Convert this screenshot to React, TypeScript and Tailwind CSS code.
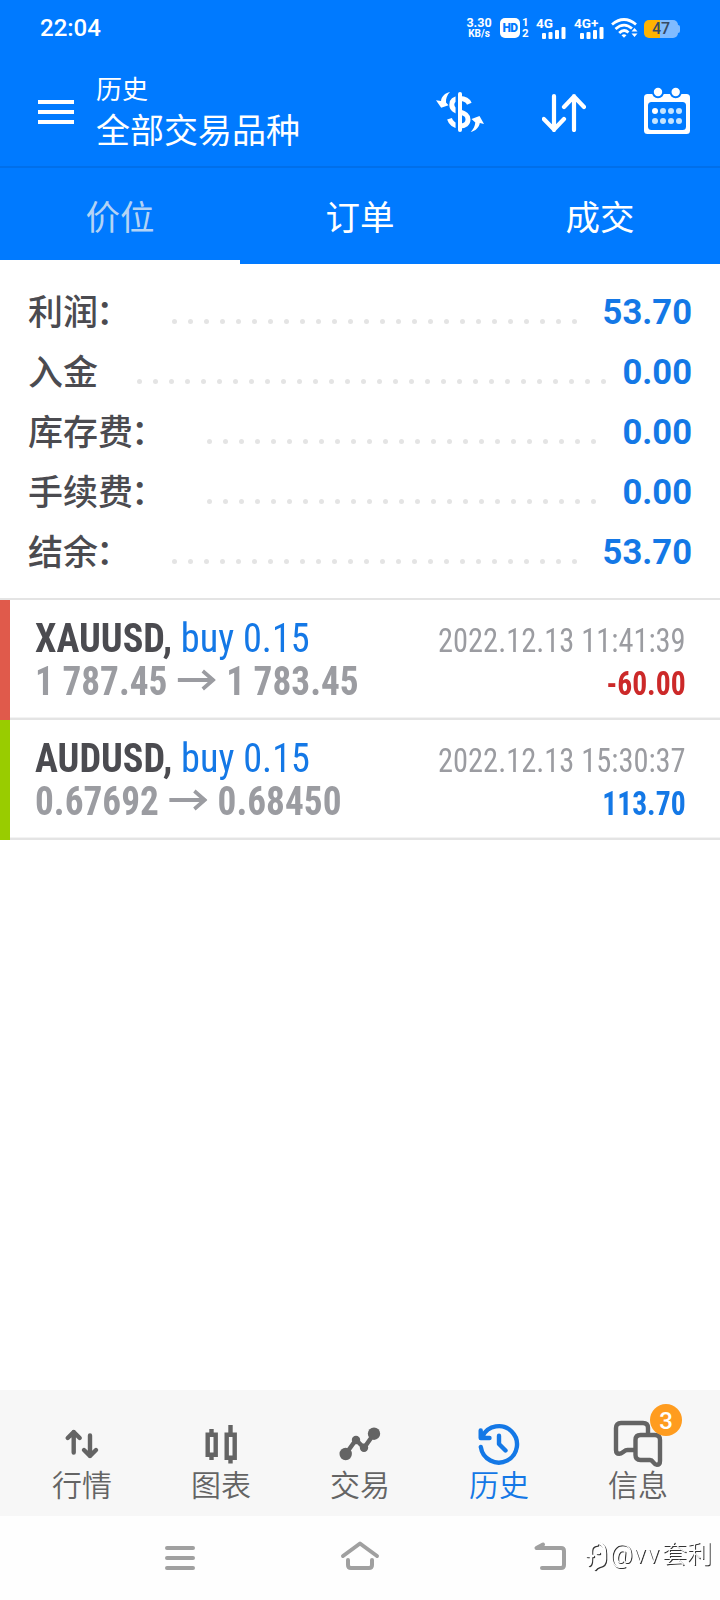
import React from 'react';
import clsx from 'clsx';

interface SummaryRow {
  label: string;
  colon?: boolean;
  dots: number;
  value: string;
}

interface Deal {
  symbol: string;
  side: string;
  open: string;
  close: string;
  time: string;
  profit: string;
  bar: string;
  profitColor: string;
}

const tabs = ['价位', '订单', '成交'];

const summary: SummaryRow[] = [
  { label: '利润', colon: true, dots: 26, value: '53.70' },
  { label: '入金', dots: 30, value: '0.00' },
  { label: '库存费', colon: true, dots: 25, value: '0.00' },
  { label: '手续费', colon: true, dots: 25, value: '0.00' },
  { label: '结余', colon: true, dots: 26, value: '53.70' },
];

const deals: Deal[] = [
  { symbol: 'XAUUSD,', side: 'buy 0.15', open: '1 787.45', close: '1 783.45', time: '2022.12.13 11:41:39', profit: '-60.00', bar: 'bg-[#e05a4b]', profitColor: 'text-[#cc2929]' },
  { symbol: 'AUDUSD,', side: 'buy 0.15', open: '0.67692', close: '0.68450', time: '2022.12.13 15:30:37', profit: '113.70', bar: 'bg-[#99cc00]', profitColor: 'text-[#1478e6]' },
];

const SignalBars = () => (
  <svg width="24" height="12" viewBox="0 0 24 12" fill="#fff" className="absolute left-[6px] top-[9px]">
    <rect x="0" y="6" width="4" height="6" rx="1" />
    <rect x="6.5" y="5" width="4" height="7" rx="1" />
    <rect x="13" y="3" width="4" height="9" rx="1" />
    <rect x="19.5" y="0" width="4" height="12" rx="1" />
  </svg>
);

const StatusBar = () => (
  <div className="flex h-[58px] items-start pl-10 pr-10 text-white">
    <span className="mt-[14px] text-[24px] font-medium leading-7">22:04</span>
    <div className="ml-auto flex h-5 mt-[18px] text-white">
      <div className="w-[26px] text-center font-bold">
        <div className="text-[12.5px] leading-[10px]">3.30</div>
        <div className="mt-[1px] text-[10px] leading-[10px]">KB/s</div>
      </div>
      <div className="ml-2 flex h-5 w-5 items-center justify-center rounded-[5px] bg-white text-[12px] font-black tracking-[-0.5px] text-[#007aff]">HD</div>
      <div className="-mt-[1px] ml-[2px] w-[7px] text-[11.5px] font-bold leading-[11px]">
        <div>1</div>
        <div>2</div>
      </div>
      <div className="relative ml-[7px] w-[38px]">
        <div className="text-[13.5px] font-bold leading-[10px]">4G</div>
        <SignalBars />
      </div>
      <div className="relative w-[37px]">
        <div className="text-[13.5px] font-bold leading-[10px]">4G+</div>
        <SignalBars />
      </div>
      <svg width="27" height="20" viewBox="0 0 27 20" fill="none" stroke="#fff" strokeWidth="2.8">
        <path d="M1 6.5Q13 -3.5 25 6.5" />
        <path d="M4.5 11Q13 3.5 21 10.5" />
        <path d="M8.2 15Q13 10.2 17.5 14.5" />
        <path d="M10.5 17.3Q13 15.3 15.5 17.3L13 19.8Z" fill="#fff" stroke="none" />
        <path d="M20.5 13.5L23.5 10L26.5 13.5ZM20.5 15.5L23.5 19L26.5 15.5Z" fill="#fff" stroke="none" />
      </svg>
      <div className="ml-[6px] mt-[2px] flex h-[18px] items-center">
        <div className="flex h-[18px] w-[34px] items-center justify-center rounded-[5px] bg-linear-to-r from-[#ffb300] from-47% to-[#80bbff] to-47% text-[16px] font-medium text-[#374a63]">47</div>
        <div className="h-2 w-[2px] rounded-r bg-[#80bbff]" />
      </div>
    </div>
  </div>
);

const Header = () => (
  <div className="flex h-[110px] items-center border-b-2 border-[#006fea] pl-[38px] pr-[30px] text-white">
    <div className="space-y-[6px]">
      <div className="h-1 w-9 bg-white" />
      <div className="h-1 w-9 bg-white" />
      <div className="h-1 w-9 bg-white" />
    </div>
    <div className="ml-[22px] mt-[1px]">
      <div className="text-[26px] leading-9">历史</div>
      <div className="text-[34px] leading-[46px]">全部交易品种</div>
    </div>
    <svg width="50" height="44" viewBox="0 0 50 44" fill="none" className="ml-auto">
      <path d="M33.3 13.8C31.5 9.5 28 8.6 24 8.6C18.5 8.6 15.8 11 15.8 14.8C15.8 19.5 19.5 20.8 24 22C29.5 23.5 32 25.2 32 29.5C32 33.5 29 36 24 36C18.5 36 15 33.5 13.5 28.8" stroke="#fff" strokeWidth="5" />
      <path d="M20.8 2V42" stroke="#007aff" strokeWidth="2.5" />
      <path d="M24 4V40" stroke="#fff" strokeWidth="4" strokeLinecap="round" />
      <path d="M14 2C9 3 5.5 6.5 5 11L0 10.2L5.2 17.8L12.5 15.3L10 12.5C9.8 8.5 11 5 14 2Z" fill="#fff" />
      <path d="M34.7 42C37.5 39 39 36 39.3 32.5L35.5 29L43.5 26L48 34L43.8 33C43 37.5 39.5 41 34.7 42Z" fill="#fff" />
    </svg>
    <svg width="44" height="40" viewBox="0 0 44 40" fill="none" stroke="#fff" strokeWidth="4.2" strokeLinecap="round" strokeLinejoin="round" className="-mt-[1px] ml-[56px]">
      <path d="M12 4V38M1.8 27L12 37.5L22 27M32 38V4M22 15L32 4.5L42 15" />
    </svg>
    <svg width="46" height="48" viewBox="0 0 46 48" className="-mt-[2px] ml-[58px]">
      <rect y="7" width="46" height="40" rx="3.5" fill="#fff" />
      <rect x="4" y="15" width="38" height="28" rx="3.5" fill="#007aff" />
      <circle cx="14" cy="5" r="5.2" fill="#fff" stroke="#007aff" strokeWidth="2" />
      <circle cx="31.7" cy="5" r="5.2" fill="#fff" stroke="#007aff" strokeWidth="2" />
      {[11, 19, 27, 35].map((x) => (
        <g key={x} fill={x === 11 ? '#fff' : '#c4e4ff'}>
          <circle cx={x} cy="24" r="3" />
          <circle cx={x} cy="34" r="3" fill="#c4e4ff" />
        </g>
      ))}
    </svg>
  </div>
);

const Tabs = () => (
  <div className="grid h-24 grid-cols-3 text-center text-[34.5px] leading-[100px]">
    {tabs.map((tab, i) => (
      <div key={tab} className={clsx('h-24', i === 0 ? 'border-b-4 border-white text-[#b3d3f5]' : 'text-white')}>
        {tab}
      </div>
    ))}
  </div>
);

const Summary = () => (
  <div className="border-b-2 border-[#e4e4e4] px-7 pb-[18px] pt-4">
    {summary.map((row) => (
      <div key={row.label} className="flex h-[60px] items-center">
        <span className="mt-[7px] text-[35px] font-medium leading-[60px] text-[#4b4b50]">
          {row.label}
          {row.colon && <span className="-ml-[2px] mr-[2px]">：</span>}
        </span>
        <div className="ml-[39px] mt-[23px] flex gap-[11px]">
          {Array.from({ length: row.dots }, (_, i) => (
            <span key={i} className="h-[5px] w-[5px] rounded-full bg-[#e4e4e4]" />
          ))}
        </div>
        <span className="ml-auto mt-[6px] text-[34.6px] font-bold text-[#1478e6]">{row.value}</span>
      </div>
    ))}
  </div>
);

const DealItem = ({ deal }: { deal: Deal }) => (
  <div className="flex h-[120px]">
    <div className={clsx('w-[10px]', deal.bar)} />
    <div className="flex flex-1 justify-between border-b-2 border-[#e4e4e4] pl-[25px] pr-[34px] pt-[17px] font-['Roboto_Condensed',Roboto,sans-serif] leading-[43px] text-[#9b9ca1] shadow-[inset_0_-1px_#f3f3f3]">
      <div className="text-[40px]">
        <div className="origin-left scale-x-[0.957] whitespace-nowrap text-[#1478e6]">
          <span className="font-bold text-[#4b4b50]">{deal.symbol}</span> {deal.side}
        </div>
        <div className="flex origin-left scale-x-[0.932] whitespace-nowrap font-bold">
          <span>{deal.open}</span>
          <svg width="41" height="22" viewBox="0 0 41 22" fill="none" stroke="#9b9ca1" strokeWidth="4" className="mx-[11px] mt-[9px]">
            <path d="M0 11H39M27 2L38 11L27 20" />
          </svg>
          <span>{deal.close}</span>
        </div>
      </div>
      <div className="pt-[2px] text-right text-[34px]">
        <div className="origin-right scale-x-[0.895]">{deal.time}</div>
        <div className={clsx('origin-right scale-x-[0.87] font-bold', deal.profitColor)}>{deal.profit}</div>
      </div>
    </div>
  </div>
);

const navItems = [
  {
    label: '行情',
    icon: <path d="M21.7 37.5V17M15.7 23L21.7 17L27.7 23M38 20.5V41M32 35L38 41L44 35" />,
  },
  {
    label: '图表',
    icon: (
      <g strokeLinecap="butt" strokeLinejoin="miter">
        <path d="M16.7 19.7H24.7V39.7H16.7ZM20.5 14V19M20.5 41V45M35.7 19.7H43.7V42.7H35.7ZM39.5 10V18M39.5 44V48.5" />
      </g>
    ),
  },
  {
    label: '交易',
    icon: (
      <g>
        <path d="M15.7 39L26 24.7L34 33L44 18.7" />
        <g fill="#646464" stroke="none">
          <circle cx="15.7" cy="39" r="6.2" />
          <circle cx="26" cy="25" r="4.2" />
          <circle cx="34" cy="32.7" r="4.2" />
          <circle cx="44" cy="18.7" r="6.2" />
        </g>
      </g>
    ),
  },
  {
    label: '历史',
    active: true,
    icon: <path d="M11.8 32A18.2 18.2 0 1 0 13.5 21.3M11.7 15.5V23H20.5M30 20.7V29L36.5 35.5" />,
  },
  {
    label: '信息',
    badge: 3,
    icon: (
      <g>
        <path d="M26 35H19.5C16 35 14.5 38.8 11.2 38.8Q8 38.8 8 35V13Q8 8 13 8H35Q40 8 40 13V18" />
        <path d="M32.5 20H47Q52 20 52 25V46Q52 49.8 48.8 49.8C45.5 49.8 45.5 45 42 45H32.5Q27.5 45 27.5 40V25Q27.5 20 32.5 20Z" />
      </g>
    ),
  },
];

const BottomNav = () => (
  <div className="flex h-[126px] bg-[#f7f7f7] px-[12.5px]">
    {navItems.map((item) => (
      <div key={item.label} className={clsx('relative flex-1 pt-[25px]', item.active ? 'text-[#1478e6]' : 'text-[#646464]')}>
        <svg width="60" height="54" viewBox="0 0 60 54" fill="none" stroke="currentColor" strokeWidth="4.4" strokeLinecap="round" strokeLinejoin="round" className="mx-auto block">
          {item.icon}
        </svg>
        {item.badge && (
          <div className="absolute left-[81.5px] top-[14px] h-8 w-8 rounded-full bg-[#ff9c1f] text-center text-[24px] font-medium leading-[34px] text-white">{item.badge}</div>
        )}
        <div className="-mt-[5px] text-center text-[30px] font-[350] leading-[44px]">{item.label}</div>
      </div>
    ))}
  </div>
);

const SystemNav = () => (
  <div className="flex h-[84px] bg-[#fefefe] pl-[163px] pt-[24px]">
    <svg width="34" height="34" viewBox="0 0 34 34" stroke="#a0a0a0" strokeWidth="4" strokeLinecap="round">
      <path d="M4 8H30M4 18H30M4 28H30" />
    </svg>
    <svg width="40" height="34" viewBox="0 0 40 34" fill="none" stroke="#a0a0a0" strokeWidth="4" strokeLinecap="round" strokeLinejoin="round" className="ml-[143px]">
      <path d="M3 16L20 3.5L37 16M8 20V25Q8 28 11 28H29Q32 28 32 25V20" />
    </svg>
    <svg width="34" height="34" viewBox="0 0 34 34" fill="none" stroke="#a0a0a0" strokeWidth="4" strokeLinecap="round" strokeLinejoin="round" className="ml-[153px]">
      <path d="M10 4.5L3.5 8H28Q31 8 31 11V25Q31 28 28 28H9" />
    </svg>
    <div className="ml-[17px] flex items-start text-white [filter:drop-shadow(1px_1px_0.5px_#333)]">
      <svg width="26" height="34" viewBox="0 0 26 34" fill="none" stroke="#fff" strokeWidth="2.5" strokeLinecap="round">
        <path d="M5 25Q7 24 7 19V11Q7 5 13 4.5M3 16H9M15 3Q21 5 21 13V19Q21 25 15 26Q12 27 11 29M13 13H15" />
      </svg>
      <span className="whitespace-nowrap text-[25px] font-light leading-[30px]">
        @<span className="mx-[1px] tracking-[1.5px]">vv</span>套利
      </span>
    </div>
  </div>
);

export default function App() {
  return (
    <div lang="zh-CN" className="flex h-[1600px] w-[720px] flex-col overflow-hidden bg-white font-[Roboto,'Noto_Sans_CJK_SC',sans-serif]">
      <div className="bg-[#007aff]">
        <StatusBar />
        <Header />
        <Tabs />
      </div>
      <Summary />
      <div className="flex-1">
        {deals.map((deal) => (
          <DealItem key={deal.symbol} deal={deal} />
        ))}
      </div>
      <BottomNav />
      <SystemNav />
    </div>
  );
}
